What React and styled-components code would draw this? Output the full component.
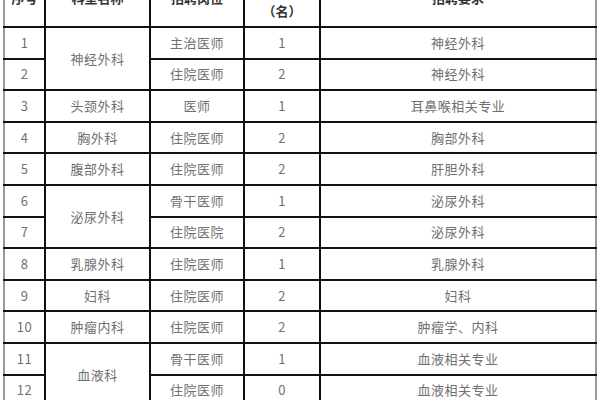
import React from "react";
import styled, { createGlobalStyle } from "styled-components";

const Global = createGlobalStyle`
  html, body { margin: 0; padding: 0; background: #fff; }
  body { font-family: "Noto Sans CJK SC", "Noto Sans", sans-serif; }
`;

const Page = styled.div`
  width: 600px;
  height: 400px;
  overflow: hidden;
  padding-left: 3px;
  box-sizing: border-box;
`;

const Table = styled.table`
  border-collapse: collapse;
  table-layout: fixed;
  width: 592px;
  margin-top: -32px;
  border-left: 2px solid #9a9a9a;
  border-right: 2px solid #9a9a9a;
`;

const HeadCell = styled.th`
  height: 56px;
  padding: 0;
  border: 2px solid #111;
  border-left-color: ${(p) => (p.$first ? "#9a9a9a" : "#111")};
  border-right-color: ${(p) => (p.$last ? "#9a9a9a" : "#111")};
  font-size: 13px;
  line-height: 26px;
  font-weight: 700;
  color: #333;
  text-align: center;
  vertical-align: middle;
`;

const Row = styled.tr`
  height: 31.6px;
`;

const Cell = styled.td`
  padding: 0;
  border: 2px solid #111;
  border-left-color: ${(p) => (p.$first ? "#9a9a9a" : "#111")};
  border-right-color: ${(p) => (p.$last ? "#9a9a9a" : "#111")};
  font-size: 13px;
  line-height: 16px;
  color: #707070;
  text-align: center;
  vertical-align: middle;
  letter-spacing: 0.5px;
`;

const rows = [
  { n: 1, dept: "神经外科", span: 2, pos: "主治医师", count: 1, req: "神经外科" },
  { n: 2, pos: "住院医师", count: 2, req: "神经外科" },
  { n: 3, dept: "头颈外科", span: 1, pos: "医师", count: 1, req: "耳鼻喉相关专业" },
  { n: 4, dept: "胸外科", span: 1, pos: "住院医师", count: 2, req: "胸部外科" },
  { n: 5, dept: "腹部外科", span: 1, pos: "住院医师", count: 2, req: "肝胆外科" },
  { n: 6, dept: "泌尿外科", span: 2, pos: "骨干医师", count: 1, req: "泌尿外科" },
  { n: 7, pos: "住院医院", count: 2, req: "泌尿外科" },
  { n: 8, dept: "乳腺外科", span: 1, pos: "住院医师", count: 1, req: "乳腺外科" },
  { n: 9, dept: "妇科", span: 1, pos: "住院医师", count: 2, req: "妇科" },
  { n: 10, dept: "肿瘤内科", span: 1, pos: "住院医师", count: 2, req: "肿瘤学、内科" },
  { n: 11, dept: "血液科", span: 2, pos: "骨干医师", count: 1, req: "血液相关专业" },
  { n: 12, pos: "住院医师", count: 0, req: "血液相关专业" },
];

export default function App() {
  return (
    <Page>
      <Global />
      <Table>
        <colgroup>
          <col style={{ width: 41 }} />
          <col style={{ width: 105 }} />
          <col style={{ width: 94 }} />
          <col style={{ width: 76 }} />
          <col style={{ width: 276 }} />
        </colgroup>
        <thead>
          <tr>
            <HeadCell $first>序号</HeadCell>
            <HeadCell>科室名称</HeadCell>
            <HeadCell>招聘岗位</HeadCell>
            <HeadCell>
              招聘人数
              <br />
              （名）
            </HeadCell>
            <HeadCell $last>招聘要求</HeadCell>
          </tr>
        </thead>
        <tbody>
          {rows.map((r) => (
            <Row key={r.n}>
              <Cell $first>{r.n}</Cell>
              {r.dept && <Cell rowSpan={r.span}>{r.dept}</Cell>}
              <Cell>{r.pos}</Cell>
              <Cell>{r.count}</Cell>
              <Cell $last>{r.req}</Cell>
            </Row>
          ))}
        </tbody>
      </Table>
    </Page>
  );
}
